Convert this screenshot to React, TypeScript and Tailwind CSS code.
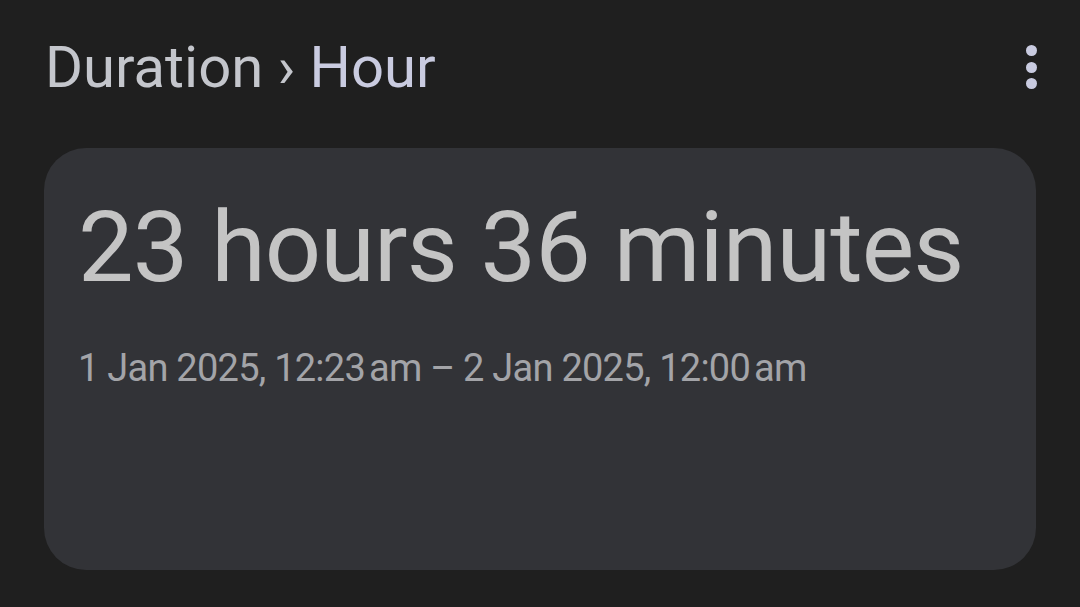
import React from 'react';

const font = { fontFamily: 'Roboto, "Noto Sans", sans-serif' };

export default function App() {
  return (
    <div className="w-[1080px] h-[607px] bg-[#1f1f1f] flex flex-col overflow-hidden" style={font}>
      {/* Header */}
      <div className="flex items-center justify-between h-[140px] pl-[45px] pr-[43px] pb-[6px]">
        <h1 className="text-[58px] leading-none tracking-[0px] text-[#c4c6cc]">
          Duration <span className="text-[#c4c6cc]">›</span> <span className="text-[#c9cbe0]">Hour</span>
        </h1>
        <div className="flex flex-col gap-[5.5px] items-center">
          <span className="w-[11px] h-[11px] rounded-full bg-[#c9cbe0]" />
          <span className="w-[11px] h-[11px] rounded-full bg-[#c9cbe0]" />
          <span className="w-[11px] h-[11px] rounded-full bg-[#c9cbe0]" />
        </div>
      </div>

      {/* Card */}
      <div className="mx-[44px] mt-[8px] h-[422px] rounded-[42px] bg-[#323337] px-[34px] pt-[50px]">
        <div className="text-[99px] leading-none tracking-[-0.9px] text-[#c4c4c4]">23 hours 36 minutes</div>
        <div className="mt-[52px] text-[38px] leading-none tracking-[-0.75px] text-[#a3a4a8]">
          1 Jan 2025, 12:23{'\u202F'}am – 2 Jan 2025, 12:00{'\u202F'}am
        </div>
      </div>
    </div>
  );
}
